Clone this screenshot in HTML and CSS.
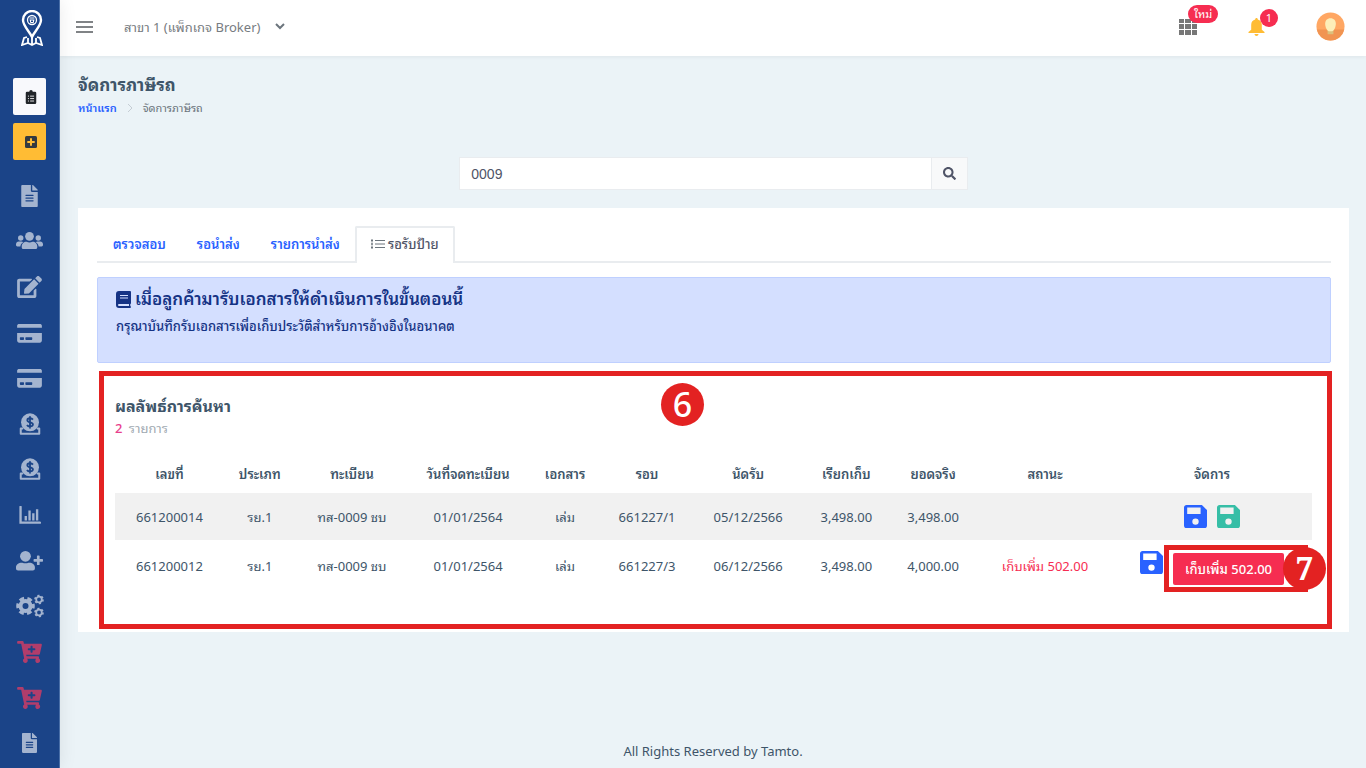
FILE: index.html
```html
<!DOCTYPE html>
<html lang="th">
<head>
<meta charset="utf-8">
<meta name="viewport" content="width=device-width, initial-scale=1">
<title>จัดการภาษีรถ</title>
<link rel="stylesheet" href="styles.css">
</head>
<body>
<svg class="sprite" aria-hidden="true">
  <symbol id="i-file" viewBox="0 0 384 512"><path d="M224 136V0H24C10.700 0 0 10.700 0 24v464c0 13.300 10.700 24 24 24h336c13.300 0 24-10.700 24-24V160H248c-13.200 0-24-10.800-24-24zm64 236c0 6.600-5.400 12-12 12H108c-6.600 0-12-5.400-12-12v-8c0-6.600 5.400-12 12-12h168c6.600 0 12 5.400 12 12v8zm0-64c0 6.600-5.400 12-12 12H108c-6.600 0-12-5.400-12-12v-8c0-6.600 5.400-12 12-12h168c6.600 0 12 5.400 12 12v8zm0-72v8c0 6.600-5.400 12-12 12H108c-6.600 0-12-5.400-12-12v-8c0-6.600 5.400-12 12-12h168c6.600 0 12 5.400 12 12zm96-114.100v6.100H256V0h6.100c6.400 0 12.500 2.500 17 7l97.900 98c4.500 4.500 7 10.600 7 16.900z"/></symbol>
  <symbol id="i-users" viewBox="0 0 640 512"><circle cx="112" cy="184" r="64"/><circle cx="528" cy="184" r="64"/><circle cx="320" cy="144" r="104"/><path d="M32 384c-18 0-32-14-32-32v-20c0-35 29-64 64-64h64c18 0 34 7 45 19-40 22-63 49-69 97zM608 384c18 0 32-14 32-32v-20c0-35-29-64-64-64h-64c-18 0-34 7-45 19 40 22 63 49 69 97zM136 410v-29c0-64 52-107 107-107h8c44 21 94 21 138 0h8c55 0 107 43 107 107v29c0 20-16 36-36 36H172c-20 0-36-16-36-36z"/></symbol>
  <symbol id="i-edit" viewBox="0 0 576 512"><path d="M402.600 83.200l90.200 90.200c3.800 3.800 3.800 10 0 13.800L274.400 405.600l-92.800 10.300c-12.400 1.400-22.900-9.100-21.500-21.500l10.300-92.800L388.800 83.200c3.800-3.800 10-3.800 13.800 0zm162-22.900l-48.800-48.800c-15.200-15.200-39.900-15.200-55.200 0l-35.400 35.400c-3.800 3.800-3.800 10 0 13.800l90.200 90.200c3.800 3.800 10 3.800 13.800 0l35.400-35.400c15.200-15.300 15.200-40 0-55.200zM384 346.200V448H64V128h229.800c3.200 0 6.200-1.300 8.500-3.500l40-40c7.600-7.600 2.200-20.500-8.500-20.500H48C21.500 64 0 85.500 0 112v352c0 26.500 21.500 48 48 48h352c26.500 0 48-21.500 48-48V306.200c0-10.700-12.900-16-20.500-8.500l-40 40c-2.200 2.300-3.500 5.300-3.500 8.500z"/></symbol>
  <symbol id="i-card" viewBox="0 0 576 512"><path d="M0 432c0 26.500 21.500 48 48 48h480c26.500 0 48-21.500 48-48V256H0v176zm192-68c0-6.600 5.400-12 12-12h136c6.600 0 12 5.400 12 12v40c0 6.600-5.400 12-12 12H204c-6.600 0-12-5.400-12-12v-40zm-128 0c0-6.600 5.400-12 12-12h72c6.600 0 12 5.400 12 12v40c0 6.600-5.400 12-12 12H76c-6.600 0-12-5.400-12-12v-40zM576 88v48H0V88c0-26.500 21.500-40 48-40h480c26.500 0 48 13.500 48 40z"/></symbol>
  <symbol id="i-coin" viewBox="0 0 24 24"><path d="M4.500 17H1.900v5.600h20.200V17h-2.600" fill="none" stroke="currentColor" stroke-width="2.200" stroke-linejoin="round"/><circle cx="12" cy="10.200" r="9.800"/><path class="cut" d="M15.200 7.200c-.7-1-1.800-1.500-3.200-1.500-1.700 0-2.900.8-2.900 2.100 0 3 6.100 1.700 6.100 4.600 0 1.500-1.400 2.300-3.200 2.300-1.500 0-2.600-.5-3.300-1.600M12 3.500V17"/></symbol>
  <symbol id="i-chart" viewBox="0 0 24 20"><path d="M1.500 1v17.500H23" fill="none" stroke="currentColor" stroke-width="2.600" stroke-linecap="round"/><path d="M6 11h2.600v5H6zM10.200 5h2.600v11h-2.600zM14.400 8H17v8h-2.600zM18.600 3.500h2.600V16h-2.600z"/></symbol>
  <symbol id="i-useradd" viewBox="0 0 640 512"><circle cx="224" cy="144" r="128"/><path d="M314 296h-17c-46 21-100 21-146 0h-17C60 296 0 340 0 404v32c0 27 21 48 48 48h352c27 0 48-21 48-48v-32c0-64-60-108-134-108zM624 208h-64v-64c0-9-7-16-16-16h-32c-9 0-16 7-16 16v64h-64c-9 0-16 7-16 16v32c0 9 7 16 16 16h64v64c0 9 7 16 16 16h32c9 0 16-7 16-16v-64h64c9 0 16-7 16-16v-32c0-9-7-16-16-16z"/></symbol>
  <symbol id="i-cogs" viewBox="0 0 28 24"><g fill="none" stroke="currentColor"><circle cx="9.500" cy="12" r="5" stroke-width="4"/><circle cx="9.500" cy="12" r="7.800" stroke-width="3" stroke-dasharray="4.800 3.368" stroke-dashoffset="2.400"/><circle cx="23" cy="5.500" r="2.800" stroke-width="1.800"/><circle cx="23" cy="5.500" r="4" stroke-width="1.700" stroke-dasharray="2.100 2.089"/><circle cx="23" cy="18.500" r="2.800" stroke-width="1.800"/><circle cx="23" cy="18.500" r="4" stroke-width="1.700" stroke-dasharray="2.100 2.089"/></g></symbol>
  <symbol id="i-cart" viewBox="0 0 576 512"><path d="M504.717 320H211.572l6.545 32h268.418c15.401 0 26.816 14.301 23.403 29.319l-5.517 24.276C523.112 414.668 536 433.828 536 456c0 31.202-25.519 56.444-56.824 55.994-29.823-.429-54.350-24.631-55.155-54.447-.440-16.287 6.085-31.049 16.803-41.548H231.176C241.553 426.165 248 440.326 248 456c0 31.813-26.528 57.431-58.670 55.938-28.540-1.325-51.751-24.385-53.251-52.917-1.158-22.034 10.436-41.455 28.051-51.586L93.883 64H24C10.745 64 0 53.255 0 40V24C0 10.745 10.745 0 24 0h102.529c11.401 0 21.228 8.021 23.513 19.190L159.208 64H551.990c15.401 0 26.816 14.301 23.403 29.319l-47.273 208C525.637 312.246 515.923 320 504.717 320zM408 168h-48v-40c0-8.837-7.163-16-16-16h-16c-8.837 0-16 7.163-16 16v40h-48c-8.837 0-16 7.163-16 16v16c0 8.837 7.163 16 16 16h48v40c0 8.837 7.163 16 16 16h16c8.837 0 16-7.163 16-16v-40h48c8.837 0 16-7.163 16-16v-16c0-8.837-7.163-16-16-16z"/></symbol>
  <symbol id="i-save" viewBox="3 3 18 18"><path fill-rule="evenodd" d="M16 10H5.500V5H16zM12 18.500a2.500 2.500 0 1 1 0-5 2.500 2.500 0 0 1 0 5zM17 3H5c-1.110 0-2 .9-2 2v14a2 2 0 0 0 2 2h14a2 2 0 0 0 2-2V7z"/></symbol>
  <symbol id="i-search" viewBox="0 0 512 512"><path d="M505 442.700L405.300 343c-4.500-4.500-10.600-7-17-7H372c27.600-35.300 44-79.700 44-128C416 93.100 322.900 0 208 0S0 93.100 0 208s93.100 208 208 208c48.300 0 92.700-16.400 128-44v16.300c0 6.400 2.500 12.500 7 17l99.700 99.700c9.400 9.400 24.600 9.400 33.900 0l28.300-28.300c9.400-9.400 9.400-24.600.1-34zM208 336c-70.700 0-128-57.200-128-128 0-70.700 57.200-128 128-128 70.700 0 128 57.200 128 128 0 70.700-57.200 128-128 128z"/></symbol>
</svg>
<div class="app">
  <aside class="sidebar">
    <a class="logo" href="#" aria-label="Tamto">
      <svg viewBox="0 0 22 36" width="22" height="36"><path d="M11 27C9 22 2 16 2 10a9 9 0 0 1 18 0c0 6-7 12-9 17z" stroke-width="2.400"/><circle cx="11" cy="10" r="4.500" stroke-width="1.300"/><path d="M8.500 8h5M8.500 10h5M9.500 10v2.500h3V10" stroke-width="1"/><path d="M6 27l-3 1-2 7 6-2 4 2 4-2 6 2-2-7-3-1M7 28v5M15 28v5M11 28v7" stroke-width="1.800"/></svg>
    </a>
    <div class="quick">
      <button class="quick-btn" aria-label="รายการ"><svg viewBox="0 0 12 16" width="12" height="14"><path d="M1.500 2H4a2 2 0 0 1 4 0h2.500A1.500 1.500 0 0 1 12 3.500v11a1.500 1.500 0 0 1-1.500 1.500h-9A1.500 1.500 0 0 1 0 14.500v-11A1.500 1.500 0 0 1 1.500 2z"/><path d="M2.500 7h1.200M5 7h4.500M2.500 9.800h1.200M5 9.800h4.500M2.500 12.600h1.200M5 12.600h4.500" stroke="#f8f9fc" stroke-width="1"/></svg></button>
      <button class="quick-btn quick-add" aria-label="เพิ่ม"><svg viewBox="0 0 12 12" width="12" height="12"><rect width="12" height="12" rx="1.500"/><path d="M6 2.300v7.400M2.300 6h7.400" stroke="#ffbc34" stroke-width="2"/></svg></button>
    </div>
    <nav class="side-nav" aria-label="เมนูหลัก">
      <a href="#" aria-label="เอกสาร"><svg width="17" height="22"><use href="#i-file"/></svg></a>
      <a href="#" aria-label="ลูกค้า"><svg width="27" height="22"><use href="#i-users"/></svg></a>
      <a href="#" aria-label="แก้ไข"><svg width="25" height="22"><use href="#i-edit"/></svg></a>
      <a href="#" aria-label="บัตร"><svg width="25" height="22"><use href="#i-card"/></svg></a>
      <a href="#" aria-label="ชำระเงิน"><svg width="25" height="22"><use href="#i-card"/></svg></a>
      <a href="#" aria-label="รายรับ"><svg width="22" height="22"><use href="#i-coin"/></svg></a>
      <a href="#" aria-label="รายจ่าย"><svg width="22" height="22"><use href="#i-coin"/></svg></a>
      <a href="#" aria-label="รายงาน"><svg width="22" height="18"><use href="#i-chart"/></svg></a>
      <a href="#" aria-label="เพิ่มผู้ใช้"><svg width="27" height="22"><use href="#i-useradd"/></svg></a>
      <a href="#" aria-label="ตั้งค่า"><svg width="28" height="24"><use href="#i-cogs"/></svg></a>
      <a class="hot" href="#" aria-label="ซื้อแพ็กเกจ"><svg width="25" height="22"><use href="#i-cart"/></svg></a>
      <a class="hot" href="#" aria-label="ซื้อเพิ่ม"><svg width="25" height="22"><use href="#i-cart"/></svg></a>
      <a href="#" aria-label="คู่มือ"><svg width="17" height="20"><use href="#i-file"/></svg></a>
    </nav>
  </aside>
  <div class="page">
    <header class="topbar">
      <button class="plain" aria-label="เมนู"><svg width="17" height="12" viewBox="0 0 17 12"><path d="M0 1h17M0 6h17M0 11h17" stroke="#808386" stroke-width="2"/></svg></button>
      <div class="branch">
        <select aria-label="สาขา"><option>สาขา 1 (แพ็กเกจ Broker)</option></select>
        <svg width="10" height="7" viewBox="0 0 10 7"><path d="M1 1l4 4 4-4" fill="none" stroke="#6c757d" stroke-width="2"/></svg>
      </div>
      <div class="tools">
        <button class="plain tool apps" aria-label="แอป"><svg width="18" height="16" viewBox="0 0 18 16"><path d="M0 0h5v4H0zM6 0h6v4H6zM13 0h5v4h-5zM0 5h5v5H0zM6 5h6v5H6zM13 5h5v5h-5zM0 11h5v5H0zM6 11h6v5H6zM13 11h5v5h-5z"/></svg><span class="badge badge-new">ใหม่</span></button>
        <button class="plain tool bell" aria-label="แจ้งเตือน"><svg width="17" height="18" viewBox="0 0 16 18"><path d="M8 0c.8 0 1.300.6 1.300 1.500 2.400.6 4 2.500 4 5.200v5L16 14v1H0v-1l2.700-2.300v-5c0-2.700 1.600-4.600 4-5.200C6.700.6 7.200 0 8 0zM6 16h4c0 2.600-4 2.600-4 0z"/></svg><span class="badge">1</span></button>
        <button class="plain tool" aria-label="บัญชีผู้ใช้"><svg width="29" height="29" viewBox="0 0 30 30"><circle cx="15" cy="15" r="14.500" fill="#ffa763"/><path d="M.8 18h28.400A14.500 14.500 0 0 1 .8 18z" fill="#f19452"/><path d="M12 18h6v5h-6z" fill="#dcc07d"/><path d="M15 6.500c3.500 0 5.500 2.500 5.500 5.500 0 4-2 8-4 8h-3c-2 0-4-4-4-8 0-3 2-5.500 5.500-5.500z" fill="#fdeeb8"/></svg></button>
      </div>
    </header>
    <main class="content">
      <h1>จัดการภาษีรถ</h1>
      <nav class="crumbs" aria-label="breadcrumb"><a href="#">หน้าแรก</a><svg width="6" height="10" viewBox="0 0 6 10"><path d="M1 1l4 4-4 4" fill="none" stroke="#c5cdd4"/></svg><span>จัดการภาษีรถ</span></nav>
      <form class="search">
        <input type="text" value="0009" aria-label="ค้นหา">
        <button type="button" aria-label="ค้นหา"><svg width="13" height="13"><use href="#i-search"/></svg></button>
      </form>
      <section class="card">
        <nav class="tabs" aria-label="ขั้นตอน">
          <a href="#">ตรวจสอบ</a><a href="#">รอนำส่ง</a><a href="#">รายการนำส่ง</a>
          <a class="active" href="#" aria-current="page"><svg width="14" height="10" viewBox="0 0 14 10"><path d="M4 1.500h10M4 5h10M4 8.500h10M1 0v3M1 3.500v3M1 7v3M0 1.500h2M0 5h2M0 8.500h2" stroke="#6c757d"/></svg>รอรับป้าย</a>
        </nav>
        <div class="notice">
          <h2><svg width="15" height="17" viewBox="0 0 15 17"><path fill-rule="evenodd" d="M3 0h11a1 1 0 0 1 1 1v11a1 1 0 0 1-.7 1v2c.9.3.9 2 0 2H3a3 3 0 0 1-3-3V3a3 3 0 0 1 3-3zM4 4v1h8V4zm0 2.500v1h8v-1zM3 13a1 1 0 0 0 0 2h10v-2z"/></svg>เมื่อลูกค้ามารับเอกสารให้ดำเนินการในขั้นตอนนี้</h2>
          <p>กรุณาบันทึกรับเอกสารเพื่อเก็บประวัติสำหรับการอ้างอิงในอนาคต</p>
        </div>
        <section class="results">
          <h2>ผลลัพธ์การค้นหา</h2>
          <p class="count"><b>2</b> รายการ</p>
          <table>
            <colgroup><col class="w-no"><col class="w-type"><col class="w-plate"><col class="w-reg"><col class="w-doc"><col class="w-round"><col class="w-plate"><col class="w-bill"><col class="w-round"><col class="w-status"><col class="w-act"></colgroup>
            <thead><tr><th>เลขที่</th><th>ประเภท</th><th>ทะเบียน</th><th>วันที่จดทะเบียน</th><th>เอกสาร</th><th>รอบ</th><th>นัดรับ</th><th>เรียกเก็บ</th><th>ยอดจริง</th><th>สถานะ</th><th>จัดการ</th></tr></thead>
            <tbody>
              <tr><td>661200014</td><td>รย.1</td><td>ทส-0009 ชบ</td><td>01/01/2564</td><td>เล่ม</td><td>661227/1</td><td>05/12/2566</td><td>3,498.00</td><td>3,498.00</td><td></td>
                <td><div class="actions"><button class="plain save" aria-label="บันทึก"><svg width="23" height="23"><use href="#i-save"/></svg></button><button class="plain save done" aria-label="บันทึกแล้ว"><svg width="23" height="23"><use href="#i-save"/></svg></button></div></td></tr>
              <tr><td>661200012</td><td>รย.1</td><td>ทส-0009 ชบ</td><td>01/01/2564</td><td>เล่ม</td><td>661227/3</td><td>06/12/2566</td><td>3,498.00</td><td>4,000.00</td><td class="due">เก็บเพิ่ม 502.00</td>
                <td><div class="actions with-collect"><button class="plain save" aria-label="บันทึก"><svg width="23" height="23"><use href="#i-save"/></svg></button><div class="callout"><button class="collect">เก็บเพิ่ม 502.00</button><span class="frame"></span><span class="step">7</span></div></div></td></tr>
            </tbody>
          </table>
          <span class="frame"></span><span class="step">6</span>
        </section>
      </section>
    </main>
    <footer>All Rights Reserved by Tamto.</footer>
  </div>
</div>
</body>
</html>
```
FILE: styles.css
```css
* { box-sizing: border-box; }
body {
  margin: 0;
  background: #ebf3f7;
  color: #3e5569;
  font: 13px/20px "Noto Sans", "Noto Sans Thai Looped", "Loma", "Garuda", "Waree", "Noto Sans Thai", sans-serif;
}
h1, h2, p { margin: 0; }
a { color: #2962ff; text-decoration: none; }
button, input, select { font: inherit; color: inherit; }
button { cursor: pointer; }
svg { display: block; flex: none; fill: currentColor; }
.sprite { position: absolute; width: 0; height: 0; }
.plain { padding: 0; border: 0; background: none; }

.app { display: flex; min-height: 100vh; }

.sidebar {
  display: flex;
  flex: none;
  flex-direction: column;
  align-items: center;
  width: 60px;
  padding: 10px 0 2px;
  border-right: 1px solid #4a6fa8;
  background: #1b4488;
  box-shadow: 1px 0 16px rgba(0, 0, 0, .08);
  z-index: 1;
}
.logo { margin-left: 4px; }
.logo svg { fill: none; stroke: #fff; }
.quick { display: grid; gap: 8px; margin: 32px 0 13px; }
.quick-btn {
  display: grid;
  place-items: center;
  width: 33px;
  height: 37px;
  padding: 0 0 0 2px;
  border: 0;
  border-radius: 2px;
  background: #f8f9fc;
  color: #212529;
}
.quick-add { background: #ffbc34; color: #343a40; }
.side-nav { display: flex; flex: 1; flex-direction: column; width: 100%; }
.side-nav a { display: flex; flex: 1; align-items: center; justify-content: center; color: #a4b4cf; }
.side-nav .hot { color: #b13d6b; }
.cut { fill: none; stroke: #1b4488; stroke-width: 2; }

.page { display: flex; flex: 1; flex-direction: column; min-width: 0; }
.topbar {
  display: flex;
  align-items: center;
  height: 56px;
  padding: 0 21px 3px 16px;
  background: #fff;
  box-shadow: 0 1px 4px rgba(0, 0, 0, .06);
}
.branch { display: flex; align-items: center; gap: 14px; margin-left: 31px; color: #777c81; }
.branch select { height: 32px; padding: 0; border: 0; background: none; appearance: none; }
.tools { display: flex; align-items: center; gap: 51px; margin-left: auto; }
.tool { position: relative; }
.apps { color: #777; }
.bell { color: #ffbc34; }
.badge {
  position: absolute;
  left: 12px;
  bottom: 9px;
  min-width: 18px;
  height: 18px;
  padding: 0 5px;
  border-radius: 9px;
  background: #f62d51;
  color: #fff;
  font-size: 11px;
  line-height: 18px;
}
.badge-new { left: 9px; bottom: 12px; padding: 0 6px; white-space: nowrap; }

.content { flex: 1; padding: 18px 17px 0 18px; }
h1 { font-size: 17px; line-height: 22px; }
.crumbs { display: flex; align-items: center; gap: 10px; margin-top: 2px; font-size: 11px; color: #6c757d; }
.crumbs a { font-weight: 600; }
.search { display: flex; width: 40%; min-width: 260px; margin: 39px auto 18px; height: 33px; border: 1px solid #e9ecef; }
.search input { flex: 1; min-width: 0; padding: 0 11px; border: 0; background: #fff; color: #4f5467; font-family: "Liberation Sans", sans-serif; font-size: 14px; }
.search button { display: grid; place-items: center; width: 36px; padding: 0; border: 0; border-left: 1px solid #e9ecef; background: #f8f9fa; color: #4f5467; }

.card { padding: 18px 18px 3px 19px; background: #fff; }
.tabs { display: flex; height: 37px; border-bottom: 2px solid #e9ecef; }
.tabs a { padding: 8px 15px 8px 16px; font-weight: 600; }
.tabs .active {
  display: flex;
  align-items: center;
  gap: 3px;
  height: 37px;
  padding: 0 14px 3px;
  border: 2px solid #e9ecef;
  border-bottom: 0;
  border-radius: 2px 2px 0 0;
  background: #fff;
  color: #4f5467;
  font-weight: 500;
}
.notice { min-height: 86px; margin-top: 14px; padding: 8px 18px; border: 1px solid #bfd0ff; border-radius: 2px; background: #d4dfff; color: #153385; }
.notice h2 { display: flex; align-items: center; gap: 4px; font-size: 17px; font-weight: 600; line-height: 26px; }
.notice p { margin-top: 4px; font-weight: 500; }

.results { position: relative; margin-top: 8px; padding: 23px 19px 37px 18px; }
.results h2 { font-size: 16px; line-height: 24px; }
.count { color: #a1aab2; }
.count b { margin-right: 3px; color: #e83e8c; font-weight: 500; }
table { width: 100%; margin-top: 16px; border-collapse: collapse; table-layout: fixed; text-align: center; }
th, td { padding: 0; white-space: nowrap; }
th { height: 39px; font-weight: 600; }
td { height: 47px; }
tbody tr:first-child { background: #f1f1f1; }
tbody tr:last-child td { height: 52px; }
.w-no { width: 9.1%; }
.w-type { width: 6%; }
.w-plate { width: 9.4%; }
.w-reg { width: 10%; }
.w-doc { width: 6.2%; }
.w-round { width: 7.5%; }
.w-bill { width: 7%; }
.w-status { width: 11.2%; }
.w-act { width: 16.7%; }
.due { color: #f62d51; }
.actions { display: flex; align-items: center; justify-content: center; gap: 10px; }
.with-collect { align-items: flex-start; padding-top: 4px; }
.save { color: #2962ff; }
.done { color: #36bea6; }
.callout { position: relative; margin-top: 2px; }
.collect { display: block; height: 32px; padding: 0 12px; border: 0; border-radius: 2px; background: #f62d51; color: #fff; font-weight: 500; }

.frame { position: absolute; inset: 0 -1px 0 2px; border: 5px solid #e32222; pointer-events: none; }
.callout .frame { inset: -8px -24px -7px -9px; border-right: 0; }
.step {
  position: absolute;
  top: 12px;
  left: 564px;
  width: 43px;
  height: 43px;
  border-radius: 50%;
  background: #e32222;
  color: #fff;
  font: 500 34px/42px "Noto Sans", sans-serif;
  text-align: center;
}
.callout .step { top: -6px; left: auto; right: -42px; font-family: "Noto Serif", "DejaVu Serif", serif; font-size: 32px; font-weight: 700; }
footer { padding: 0 0 7px; text-align: center; }
```
